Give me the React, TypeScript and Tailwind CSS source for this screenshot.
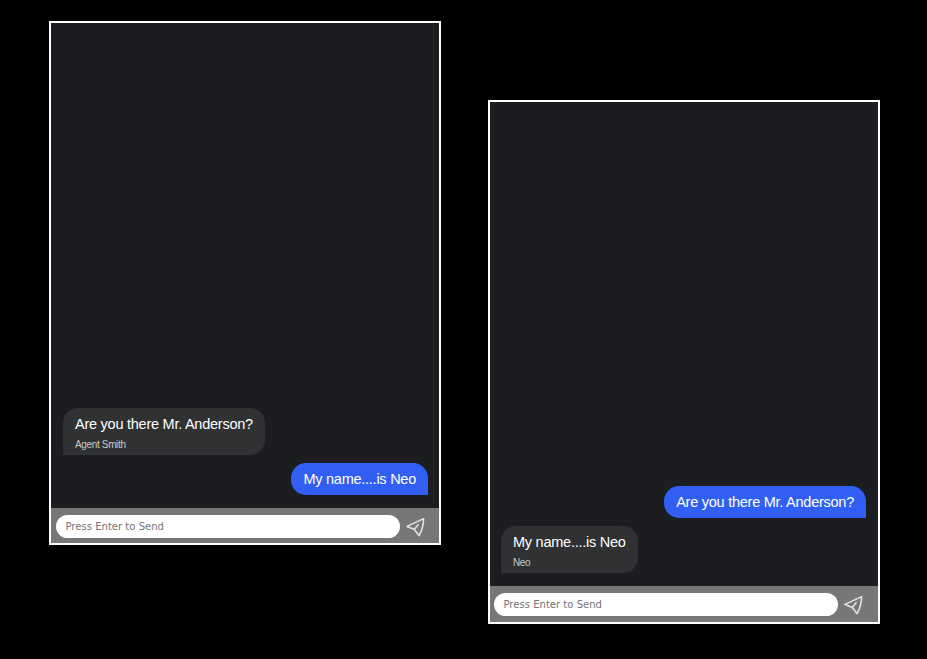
type Message = { text: string; author?: string };

function SendIcon() {
  return (
    <svg className="mt-[1.5px] h-5 w-5 shrink-0" viewBox="0 0 20 20" fill="none" stroke="#e2e2e2" strokeWidth="1.6" strokeLinejoin="round" strokeLinecap="round">
      <path d="M1 9.4 17.6 1.6Q17.4 11 13.2 18.7L8.3 12.4Z" />
      <path d="M8.3 12.4 12.2 7.6" />
    </svg>
  );
}

function Bubble({ text, author }: Message) {
  if (author) {
    return (
      <div className="h-[47px] self-start rounded-[15px] rounded-bl-none bg-[#303133] px-3 pt-[7px] text-white">
        <div className="text-[14.5px] leading-[18px] tracking-[-0.25px] whitespace-nowrap">{text}</div>
        <div className="mt-[6px] text-[10px] leading-[11px] tracking-[-0.35px] text-[#c8c8c8]">{author}</div>
      </div>
    );
  }
  return (
    <div className="h-8 self-end rounded-[15px] rounded-br-none bg-[#315ff4] px-3 pt-[7px] text-[14.5px] leading-[18px] tracking-[-0.25px] whitespace-nowrap text-white">
      {text}
    </div>
  );
}

type ChatWindowProps = { messages: Message[]; className: string; listClass: string; footerClass: string };

function ChatWindow({ messages, className, listClass, footerClass }: ChatWindowProps) {
  return (
    <section className={`flex h-[524px] w-[392px] shrink-0 flex-col border-2 border-white bg-[#1c1d20] ${className}`}>
      <div className={`flex flex-1 flex-col justify-end gap-2 pb-[13px] ${listClass}`}>
        {messages.map((m) => (
          <Bubble key={m.text} {...m} />
        ))}
      </div>
      <div className={`flex items-start bg-[#777777] pt-[7px] ${footerClass}`}>
        <input
          className="h-[23px] w-[344px] rounded-full bg-white px-[9.5px] font-['DejaVu_Sans_Condensed','DejaVu_Sans',sans-serif] text-[11.2px] placeholder:text-[#757575]"
          placeholder="Press Enter to Send"
        />
        <SendIcon />
      </div>
    </section>
  );
}

export default function App() {
  return (
    <main className="flex h-[659px] w-[927px] items-start gap-[47px] overflow-hidden bg-black pl-[49px] font-['Liberation_Sans',Arial,sans-serif]">
      <ChatWindow
        className="mt-[21px]"
        listClass="pr-[11px] pl-3"
        footerClass="h-[35px] gap-[6px] pl-[5px]"
        messages={[{ text: "Are you there Mr. Anderson?", author: "Agent Smith" }, { text: "My name....is Neo" }]}
      />
      <ChatWindow
        className="mt-[100px]"
        listClass="pr-3 pl-[11px]"
        footerClass="h-9 gap-[6px] pl-1"
        messages={[{ text: "Are you there Mr. Anderson?" }, { text: "My name....is Neo", author: "Neo" }]}
      />
    </main>
  );
}
